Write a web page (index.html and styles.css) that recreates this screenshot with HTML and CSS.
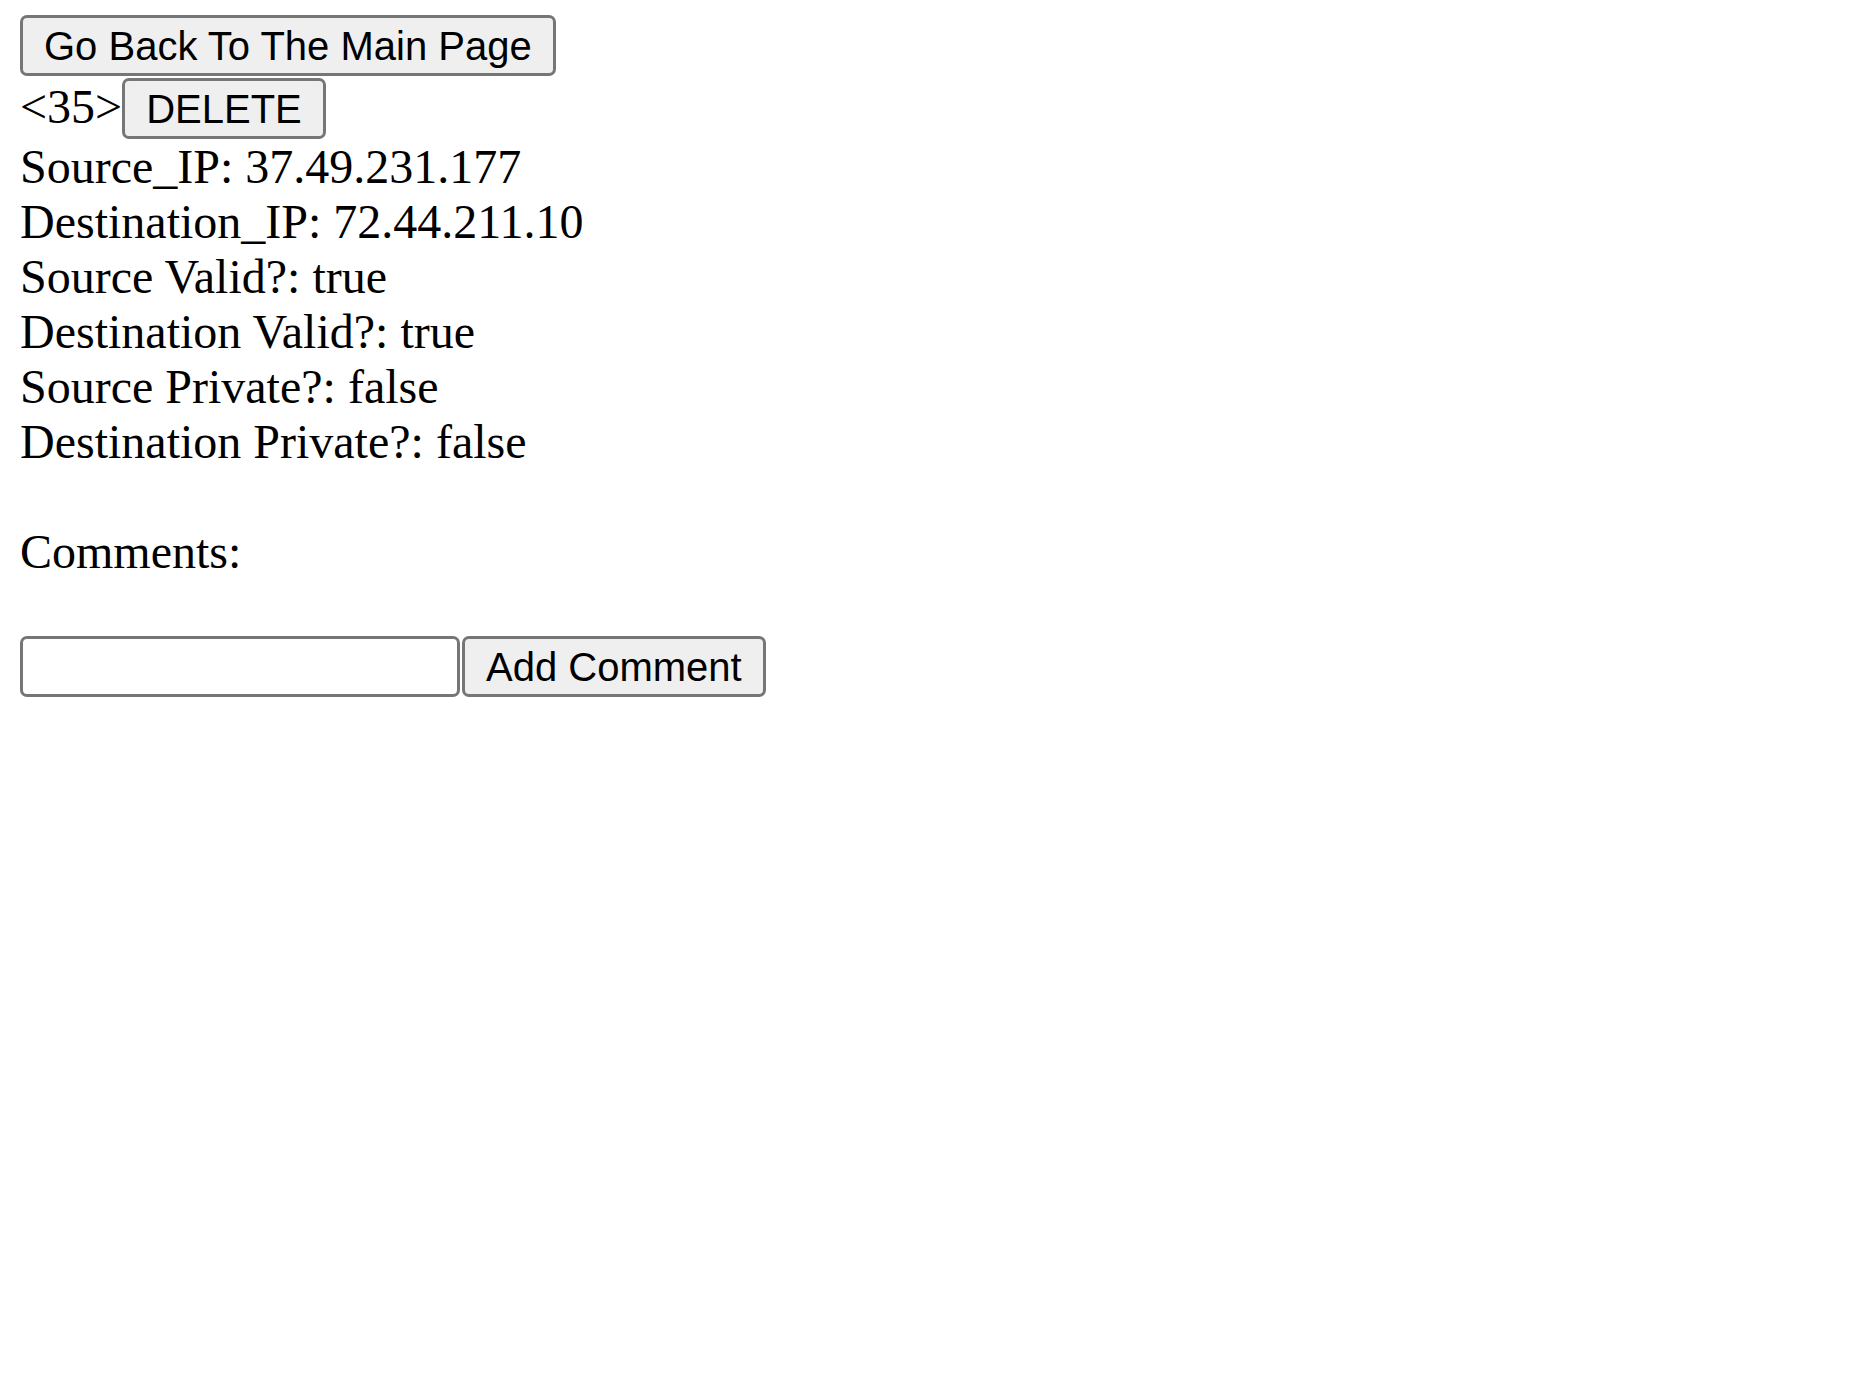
FILE: index.html
```html
<!DOCTYPE html>
<html>
<head>
<meta charset="utf-8">
<link rel="stylesheet" href="styles.css">
</head>
<body>
<div class="page">
  <div class="row row-top">
    <button class="btn">Go Back To The Main Page</button>
  </div>
  <div class="row row-id">
    <span class="txt">&lt;35&gt;</span><button class="btn">DELETE</button>
  </div>
  <div class="info">
    <div class="line">Source_IP: 37.49.231.177</div>
    <div class="line">Destination_IP: 72.44.211.10</div>
    <div class="line">Source Valid?: true</div>
    <div class="line">Destination Valid?: true</div>
    <div class="line">Source Private?: false</div>
    <div class="line">Destination Private?: false</div>
    <div class="line blank"></div>
    <div class="line">Comments:</div>
    <div class="line blank"></div>
  </div>
  <div class="row row-form">
    <input class="field" type="text"><button class="btn">Add Comment</button>
  </div>
</div>
</body>
</html>
```

FILE: styles.css
```css
html, body {
  margin: 0;
  padding: 0;
  background: #ffffff;
}
.page {
  padding: 15px 20px;
  font-family: "Liberation Serif", "Times New Roman", serif;
  font-size: 48px;
  line-height: 55px;
  color: #000;
}
.row {
  display: flex;
}
.row-id {
  margin-top: 2px;
  align-items: baseline;
}
.btn {
  font-family: "Liberation Sans", Arial, Helvetica, sans-serif;
  font-size: 40px;
  line-height: 46px;
  height: 61px;
  padding: 0 21px;
  background: #efefef;
  border: 3px solid #767676;
  border-radius: 7px;
  color: #000;
  box-sizing: border-box;
}
.txt {
  white-space: pre;
}
.line {
  height: 55px;
  white-space: pre;
}
.row-form {
  margin-top: 2px;
  gap: 2px;
}
.field {
  width: 440px;
  height: 61px;
  box-sizing: border-box;
  border: 3px solid #767676;
  border-radius: 7px;
  background: #fff;
  margin: 0;
  padding: 0 6px;
  font-size: 40px;
}
```
